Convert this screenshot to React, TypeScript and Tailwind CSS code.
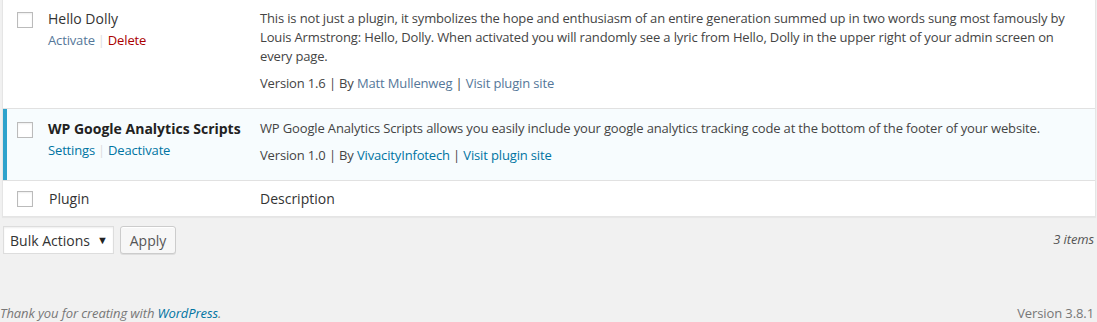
import React from 'react';

// Plugins list table (WP 3.8 admin style)
const plugins = [
    {
        name: 'Hello Dolly',
        active: false,
        actions: [
            {text: 'Activate', danger: false},
            {text: 'Delete', danger: true}
        ],
        description:
            'This is not just a plugin, it symbolizes the hope and enthusiasm of an entire generation summed up in two words sung most famously by Louis Armstrong: Hello, Dolly. When activated you will randomly see a lyric from Hello, Dolly in the upper right of your admin screen on every page.',
        version: '1.6',
        author: 'Matt Mullenweg'
    },
    {
        name: 'WP Google Analytics Scripts',
        active: true,
        actions: [
            {text: 'Settings', danger: false},
            {text: 'Deactivate', danger: false}
        ],
        description: 'WP Google Analytics Scripts allows you easily include your google analytics tracking code at the bottom of the footer of your website.',
        version: '1.0',
        author: 'VivacityInfotech'
    }
];

function Checkbox(): JSX.Element {
    return <span className="block w-[16px] h-[16px] bg-white border border-[#bbb] shadow-[inset_0_1px_2px_rgba(0,0,0,0.07)]" />;
}

export default function App(): JSX.Element {
    return (
        <div className="w-[1097px] h-[322px] bg-[#f1f1f1] overflow-hidden text-[13px] text-[#444]" style={{fontFamily: '"Open Sans", "Liberation Sans", sans-serif'}}>
            {/* TABLE */}
            <div className="ml-[2px] w-[1094px] -mt-[2px] bg-white border border-[#e5e5e5] shadow-[0_1px_1px_rgba(0,0,0,0.04)]">
                {plugins.map((p) => {
                    const link = p.active ? 'text-[#0074a2]' : 'text-[#557799]';
                    return (
                        <div key={p.name} className={`flex border-b border-[#e1e1e1] ${p.active ? 'bg-[#f7fcfe]' : 'bg-white'}`}>
                            <div className={`w-[38px] shrink-0 pt-[13px] ${p.active ? 'border-l-4 border-[#2ea2cc] pl-[10px]' : 'pl-[14px]'}`}>
                                <Checkbox />
                            </div>
                            <div className="w-[209px] shrink-0 pl-[7px] pt-[10px]">
                                <div className={`text-[14px] leading-[20px] ${p.active ? 'font-bold text-[#222]' : 'text-[#333]'}`}>{p.name}</div>
                                <div className="mt-px leading-[20px] flex items-center tracking-[-0.15px]">
                                    {p.actions.map((a, i) => (
                                        <React.Fragment key={a.text}>
                                            {i > 0 && <span className="mx-[3px] text-[#ddd]">|</span>}
                                            <span className={a.danger ? 'text-[#aa0000]' : link}>{a.text}</span>
                                        </React.Fragment>
                                    ))}
                                </div>
                            </div>
                            <div className="flex-1 pl-[10px] pr-[10px] pt-[10px] pb-[15px] tracking-[-0.15px]">
                                <p className="leading-[19px]">{p.description}</p>
                                <p className="leading-[19px] mt-[8px]">
                                    Version {p.version} | By <span className={link}>{p.author}</span> | <span className={link}>Visit plugin site</span>
                                </p>
                            </div>
                        </div>
                    );
                })}
                {/* FOOTER ROW */}
                <div className="flex h-[35px] items-center text-[14px] text-[#333]">
                    <div className="w-[38px] shrink-0 pl-[14px]">
                        <Checkbox />
                    </div>
                    <div className="w-[209px] shrink-0 pl-[8px]">Plugin</div>
                    <div className="flex-1 pl-[10px]">Description</div>
                </div>
            </div>

            {/* BULK ACTIONS */}
            <div className="flex items-center mt-[9px] ml-[3px] mr-[3px]">
                <div className="w-[111px] h-[28px] bg-white border border-[#ddd] flex items-center justify-between pl-[6px] pr-[5px] text-[14px] text-[#333] shadow-[inset_0_1px_2px_rgba(0,0,0,0.07)]">
                    <span>Bulk Actions</span>
                    <span className="text-[11px] text-[#222]">▼</span>
                </div>
                <div className="ml-[6px] w-[56px] h-[28px] bg-[#f7f7f7] border border-[#cccccc] rounded-[3px] flex items-center justify-center text-[14px] text-[#555] shadow-[inset_0_1px_0_#fff,0_1px_0_rgba(0,0,0,0.08)]">Apply</div>
                <div className="ml-auto italic text-[#555] tracking-[-0.1px]">3 items</div>
            </div>

            {/* FOOTER */}
            <div className="flex items-center justify-between mt-[51px] pr-[3px] leading-[16px] text-[#777] tracking-[-0.1px]">
                <span className="italic">
                    Thank you for creating with <span className="text-[#0074a2]">WordPress</span>.
                </span>
                <span>Version 3.8.1</span>
            </div>
        </div>
    );
}
